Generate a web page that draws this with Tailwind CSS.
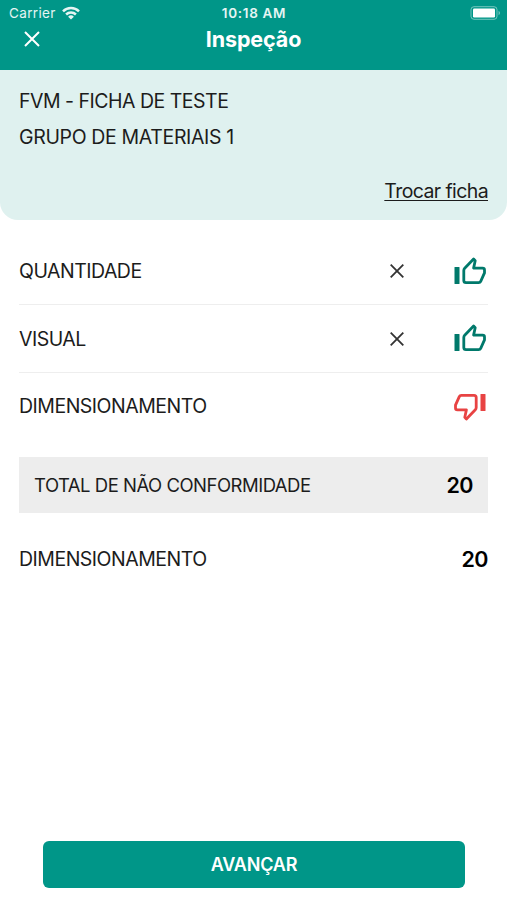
<!DOCTYPE html>
<html lang="pt-BR">
<head>
    <meta charset="UTF-8">
    <meta name="viewport" content="width=device-width, initial-scale=1.0">
    <title>Inspeção</title>
    <script src="https://cdn.jsdelivr.net/npm/@tailwindcss/browser@4"></script>
</head>
<body class="bg-white font-['Inter','Liberation_Sans',sans-serif] text-[#1c1c1c]">
    <div class="flex flex-col w-full h-screen overflow-hidden">
        <header class="h-[70px] shrink-0 bg-[#009688] text-white">
            <!-- Status bar -->
            <div class="grid grid-cols-3 items-center h-[26px] pl-[9px] pr-[6px] text-[13.5px]">
                <div class="flex items-center gap-[6px] text-white/90">
                    <span class="pt-px tracking-[0.35px]">Carrier</span>
                    <svg class="w-[18px] h-[14px]" viewBox="0 0 18 14" fill="none" stroke="currentColor" stroke-width="2.5">
                        <path d="M1 5.3a11.5 11.5 0 0 1 16 0"/>
                        <path d="M4.1 8.5a7 7 0 0 1 9.8 0"/>
                        <path d="M9 13.6L6.1 10.7a4.2 4.2 0 0 1 5.8 0z" fill="currentColor" stroke="none"/>
                    </svg>
                </div>
                <span class="pt-px -ml-[2px] text-center text-[13.5px] font-semibold tracking-[0.7px] whitespace-nowrap text-white/90">10:18 AM</span>
                <svg class="w-[31px] h-[14px] justify-self-end" viewBox="0 0 31 14">
                    <rect x="1" y=".7" width="26" height="12.6" rx="3" fill="none" stroke="#fff" stroke-opacity=".45"/>
                    <rect x="3" y="2.5" width="22" height="9" rx="1.2" fill="#fff"/>
                    <path d="M28.6 4.8a2.5 2.5 0 0 1 0 4.4z" fill="#fff" fill-opacity=".5"/>
                </svg>
            </div>
            <div class="grid grid-cols-3 items-center h-[26px] px-[24px]">
                <svg class="w-4 h-4" viewBox="0 0 16 16" fill="none" stroke="currentColor" stroke-width="2">
                    <path d="M1 1l14 14M15 1L1 15"/>
                </svg>
                <h1 class="text-center text-[21.5px] leading-[26px] font-bold tracking-[-0.1px]">Inspeção</h1>
            </div>
        </header>

        <section class="flex flex-col h-[150px] shrink-0 rounded-b-[18px] bg-[#dff1ef] px-[19px] pt-[13px] text-[19.5px]">
            <p class="leading-[36px] tracking-[-0.5px]">FVM - FICHA DE TESTE</p>
            <p class="leading-[36px] tracking-[-0.35px]">GRUPO DE MATERIAIS 1</p>
            <a href="#" class="self-end mt-[18px] leading-[36px] tracking-[-0.6px] underline decoration-1 underline-offset-2">Trocar ficha</a>
        </section>

        <main class="flex flex-col grow px-[19px] pt-[17px] text-[19.5px] tracking-[-0.5px]">
            <div class="flex items-center h-[68px] border-b border-[#eeeeee]">
                <span class="grow pt-[3px]">QUANTIDADE</span>
                <svg class="w-[14px] h-[14px] mt-px mr-[50px]" viewBox="0 0 14 14" fill="none" stroke="#333" stroke-width="1.8">
                    <path d="M.7.7l12.6 12.6M13.3.7L.7 13.3"/>
                </svg>
                <svg class="w-8 h-7 mr-[2px] text-[#00796b]" viewBox="0 0 32 28" fill="none" stroke="currentColor" stroke-width="2.8" stroke-linejoin="round">
                    <rect x=".5" y="10" width="5" height="17" rx=".6" fill="currentColor" stroke="none"/>
                    <path d="M9.8 13.4q0-1.3.9-2.2L19.6 2l1.6 1.7-1.6 7.4h9q1.9 0 1.9 1.8v3l-3.8 8.5q-.6 1.3-2 1.3H12q-2.2 0-2.2-2.2z"/>
                </svg>
            </div>
            <div class="flex items-center h-[68px] border-b border-[#eeeeee]">
                <span class="grow pt-[2px]">VISUAL</span>
                <svg class="w-[14px] h-[14px] mr-[50px]" viewBox="0 0 14 14" fill="none" stroke="#333" stroke-width="1.8">
                    <path d="M.7.7l12.6 12.6M13.3.7L.7 13.3"/>
                </svg>
                <svg class="w-8 h-7 -mt-px mr-[2px] text-[#00796b]" viewBox="0 0 32 28" fill="none" stroke="currentColor" stroke-width="2.8" stroke-linejoin="round">
                    <rect x=".5" y="10" width="5" height="17" rx=".6" fill="currentColor" stroke="none"/>
                    <path d="M9.8 13.4q0-1.3.9-2.2L19.6 2l1.6 1.7-1.6 7.4h9q1.9 0 1.9 1.8v3l-3.8 8.5q-.6 1.3-2 1.3H12q-2.2 0-2.2-2.2z"/>
                </svg>
            </div>
            <div class="flex items-center h-[67px]">
                <span class="grow pt-px">DIMENSIONAMENTO</span>
                <svg class="w-8 h-7 mr-[2px] rotate-180 text-[#e84343]" viewBox="0 0 32 28" fill="none" stroke="currentColor" stroke-width="2.8" stroke-linejoin="round">
                    <rect x=".5" y="10" width="5" height="17" rx=".6" fill="currentColor" stroke="none"/>
                    <path d="M9.8 13.4q0-1.3.9-2.2L19.6 2l1.6 1.7-1.6 7.4h9q1.9 0 1.9 1.8v3l-3.8 8.5q-.6 1.3-2 1.3H12q-2.2 0-2.2-2.2z"/>
                </svg>
            </div>

            <div class="flex items-center justify-between h-[56px] mt-[17px] px-[15px] bg-[#ededed]">
                <span class="pt-[2px] text-[18.5px]">TOTAL DE NÃO CONFORMIDADE</span>
                <span class="pt-px text-[21.5px] font-semibold text-black">20</span>
            </div>
            <div class="flex items-center justify-between h-[68px] mt-[12px]">
                <span class="pt-[2px]">DIMENSIONAMENTO</span>
                <span class="pt-px text-[21.5px] font-semibold text-black">20</span>
            </div>
        </main>

        <footer class="shrink-0 px-[43px] pb-[12px]">
            <button type="button" class="block w-[422px] h-[47px] rounded-[6px] bg-[#009688] text-white text-[18px] font-semibold tracking-[-0.2px]">AVANÇAR</button>
        </footer>
    </div>
</body>
</html>
